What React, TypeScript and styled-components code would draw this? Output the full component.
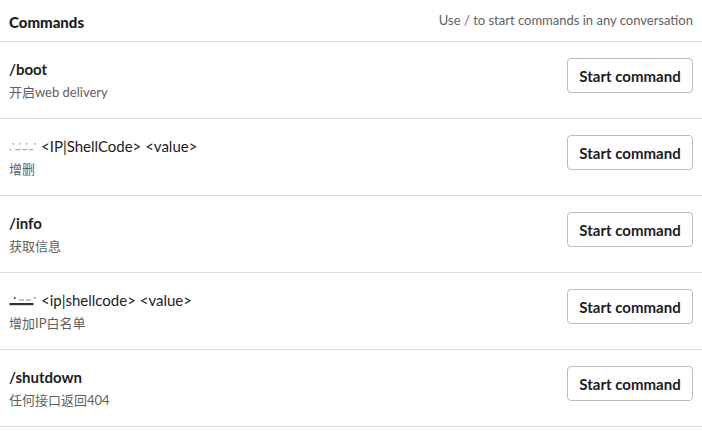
import React from "react";
import styled, { createGlobalStyle } from "styled-components";

const Global = createGlobalStyle`
  html, body { margin: 0; padding: 0; background: #fff; }
  body { font-family: Lato, "Noto Sans CJK SC", sans-serif; color: #1d1c1d; }
`;

const Page = styled.div`
  width: 702px;
  display: flex;
  flex-direction: column;
`;

const Header = styled.div`
  display: flex;
  align-items: center;
  justify-content: space-between;
  padding: 0 9px 0 9px;
  border-bottom: 1px solid #dddddd;
  box-sizing: border-box;
  height: 42px;
`;

const Title = styled.h1`
  margin: 0;
  font-size: 15px;
  font-weight: 900;
  color: #1d1c1d;
  position: relative;
  top: 1px;
`;

const Hint = styled.span`
  font-size: 13px;
  color: #616061;
  position: relative;
  top: -1px;
`;

const Row = styled.div`
  height: 77px;
  box-sizing: border-box;
  border-bottom: 1px solid #dddddd;
  display: flex;
  align-items: flex-start;
  justify-content: space-between;
  padding: 16px 9px 0 9px;
`;

const Info = styled.div`
  display: flex;
  flex-direction: column;
  gap: 4px;
  padding-top: 1px;
`;

const Name = styled.div<{ $bold?: boolean }>`
  font-size: 15px;
  font-weight: ${(p) => (p.$bold ? 700 : 400)};
  line-height: 20px;
  color: #1d1c1d;
  display: flex;
  align-items: center;
  gap: 4px;
`;

const Desc = styled.div`
  font-size: 13px;
  line-height: 18px;
  color: #616061;
`;

const Button = styled.button`
  height: 35px;
  width: 126px;
  box-sizing: border-box;
  border: 1px solid #bbbbbb;
  border-radius: 4px;
  background: #fff;
  font-family: Lato, sans-serif;
  font-size: 15px;
  font-weight: 700;
  color: #1d1c1d;
  padding: 0;
  cursor: pointer;
`;

const Glitch = styled.svg`
  flex: none;
`;

const GlitchA = () => (
  <Glitch width="28" height="12" viewBox="0 0 28 12">
    <g fill="#9a9a9a">
      <rect x="0.5" y="9" width="1.4" height="1.4" />
      <rect x="3.5" y="3" width="1.2" height="1.6" />
      <rect x="6.5" y="9.2" width="5" height="1" />
      <rect x="10" y="3" width="1.2" height="1.6" />
      <rect x="13.5" y="9.2" width="5" height="1" />
      <rect x="17" y="3" width="1.2" height="1.6" />
      <rect x="20" y="9.2" width="4" height="1" />
      <rect x="25.5" y="3" width="1.2" height="1.6" />
    </g>
  </Glitch>
);

const GlitchB = () => (
  <Glitch width="28" height="12" viewBox="0 0 28 12">
    <g fill="#333">
      <rect x="0.5" y="9" width="24" height="2.2" />
      <rect x="5" y="3" width="1.4" height="2" />
    </g>
    <g fill="#888">
      <rect x="10" y="5.5" width="5" height="1" />
      <rect x="17" y="5.5" width="5" height="1" />
      <rect x="25" y="3" width="1.4" height="1.8" />
    </g>
  </Glitch>
);

type Cmd = { name: React.ReactNode; bold: boolean; desc: string };

const commands: Cmd[] = [
  { name: "/boot", bold: true, desc: "开启web delivery" },
  {
    name: (
      <>
        <GlitchA />
        <span>&lt;IP|ShellCode&gt; &lt;value&gt;</span>
      </>
    ),
    bold: false,
    desc: "增删",
  },
  { name: "/info", bold: true, desc: "获取信息" },
  {
    name: (
      <>
        <GlitchB />
        <span>&lt;ip|shellcode&gt; &lt;value&gt;</span>
      </>
    ),
    bold: false,
    desc: "增加IP白名单",
  },
  { name: "/shutdown", bold: true, desc: "任何接口返回404" },
];

export default function App() {
  return (
    <>
      <Global />
      <Page>
        <Header>
          <Title>Commands</Title>
          <Hint>Use / to start commands in any conversation</Hint>
        </Header>
        {commands.map((c, i) => (
          <Row key={i}>
            <Info>
              <Name $bold={c.bold}>{c.name}</Name>
              <Desc>{c.desc}</Desc>
            </Info>
            <Button>Start command</Button>
          </Row>
        ))}
      </Page>
    </>
  );
}
